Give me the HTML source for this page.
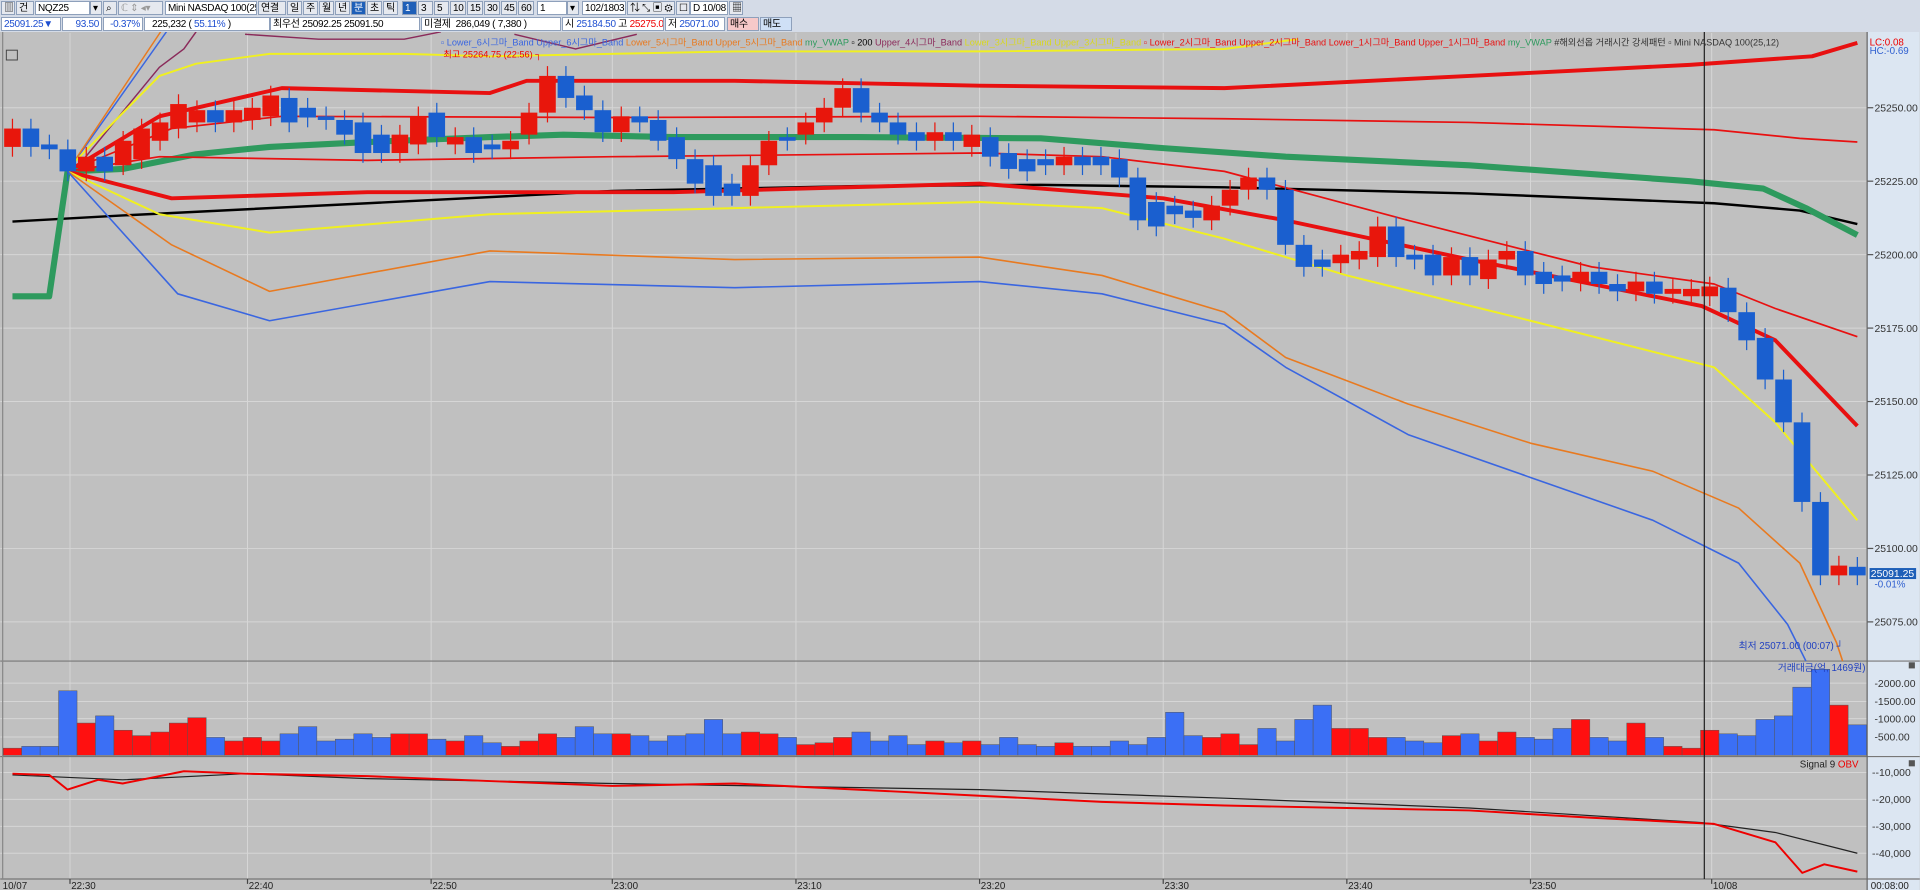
<!DOCTYPE html>
<html><head><meta charset="utf-8">
<style>
html,body{margin:0;padding:0;width:1920px;height:890px;overflow:hidden;background:#c0c0c0;font-family:"Liberation Sans","Noto Sans CJK KR",sans-serif;}
#tb{position:absolute;left:0;top:0;width:1920px;height:32px;background:#d4dbe7;font-size:10px;}
.r{position:absolute;left:0;height:16px;width:1920px;white-space:nowrap;}
.b{position:absolute;top:1px;height:14px;line-height:14px;background:#fff;border:1px solid #8ea0bb;box-sizing:border-box;padding:0 2px;color:#000;font-size:10px;letter-spacing:-0.3px;overflow:hidden}
.g{background:#e6e9ef}
.k{background:#1e5fb8;color:#fff}
svg{position:absolute;left:0;top:0}
</style></head><body>
<svg id="s" width="1920" height="890" viewBox="0 0 1568 727" font-family="Liberation Sans, Noto Sans CJK KR, sans-serif"></svg>
<div id="tb">
<div class="r" style="top:0">
<div class="b g" style="left:1px;width:14px">▥</div>
<div class="b g" style="left:16px;width:18px">건</div>
<div class="b" style="left:35px;width:55px">NQZ25</div>
<div class="b g" style="left:90px;width:12px">▾</div>
<div class="b g" style="left:103px;width:14px">⌕</div>
<div class="b g" style="left:118px;width:45px;color:#999">ℂ ⇕ ◂▾</div>
<div class="b" style="left:165px;width:92px">Mini NASDAQ 100(25.1</div>
<div class="b g" style="left:258px;width:28px">연결</div>
<div class="b g" style="left:287px;width:15px">일</div>
<div class="b g" style="left:303px;width:15px">주</div>
<div class="b g" style="left:319px;width:15px">월</div>
<div class="b g" style="left:335px;width:15px">년</div>
<div class="b k" style="left:351px;width:15px">분</div>
<div class="b g" style="left:367px;width:15px">초</div>
<div class="b g" style="left:383px;width:15px">틱</div>
<div class="b k" style="left:402px;width:15px">1</div>
<div class="b g" style="left:418px;width:15px">3</div>
<div class="b g" style="left:434px;width:15px">5</div>
<div class="b g" style="left:450px;width:16px">10</div>
<div class="b g" style="left:467px;width:16px">15</div>
<div class="b g" style="left:484px;width:16px">30</div>
<div class="b g" style="left:501px;width:16px">45</div>
<div class="b g" style="left:518px;width:16px">60</div>
<div class="b" style="left:537px;width:30px">1</div>
<div class="b g" style="left:567px;width:12px">▾</div>
<div class="b" style="left:582px;width:44px;text-align:right">102/1803</div>
<div class="b g" style="left:627px;width:48px">⇅ ⤡ ▣ ⚙</div>
<div class="b g" style="left:676px;width:14px">☐</div>
<div class="b" style="left:690px;width:38px">D 10/08</div>
<div class="b g" style="left:729px;width:14px">▦</div>
</div>
<div class="r" style="top:16px">
<div class="b" style="left:1px;width:60px;color:#1f4fd0">25091.25▼</div>
<div class="b" style="left:62px;width:40px;color:#1f4fd0;text-align:right">93.50</div>
<div class="b" style="left:103px;width:40px;color:#1f4fd0;text-align:right">-0.37%</div>
<div class="b" style="left:144px;width:126px">&nbsp;&nbsp;225,232 ( <span style="color:#1f4fd0">55.11%</span> )</div>
<div class="b" style="left:270px;width:150px">최우선 25092.25 25091.50</div>
<div class="b" style="left:421px;width:140px">미결제 &nbsp;286,049 ( 7,380 )</div>
<div class="b" style="left:562px;width:102px">시 <span style="color:#1f4fd0">25184.50</span> 고 <span style="color:#e00">25275.00</span></div>
<div class="b" style="left:665px;width:60px">저 <span style="color:#1f4fd0">25071.00</span></div>
<div class="b" style="left:727px;width:32px;background:#f6c9c9">매수</div>
<div class="b" style="left:760px;width:32px;background:#cfe0f6">매도</div>
</div>
</div>
<script>
var s=document.getElementById('s'),h='';
function P(pts,c,w){return '<polyline fill="none" stroke="'+c+'" stroke-width="'+w+'" stroke-linejoin="round" points="'+pts+'"/>';}
h+='<rect x="0" y="26" width="1568" height="701" fill="#c0c0c0"/>';
h+='<rect x="1525" y="26" width="43" height="701" fill="#dce6f2"/>';
var tx=[57,202,352,500,650,800,950,1100,1250,1398],tl=['22:30','22:40','22:50','23:00','23:10','23:20','23:30','23:40','23:50','10/08'];
tx.forEach(function(x){h+='<line x1="'+x+'" y1="27" x2="'+x+'" y2="718" stroke="#d6d6d6" stroke-width="0.8"/>';});
[ [88,'25250.00'],[148,'25225.00'],[208,'25200.00'],[268,'25175.00'],[328,'25150.00'],[388,'25125.00'],[448,'25100.00'],[508,'25075.00'] ].forEach(function(a){
h+='<line x1="0" y1="'+a[0]+'" x2="1525" y2="'+a[0]+'" stroke="#d6d6d6" stroke-width="0.8"/>';
h+='<line x1="1525" y1="'+a[0]+'" x2="1530" y2="'+a[0]+'" stroke="#555"/>';
h+='<text x="1531" y="'+(a[0]+3)+'" font-size="8.5" fill="#333">'+a[1]+'</text>';});
[[558,'2000.00'],[573,'1500.00'],[587,'1000.00'],[602,'500.00']].forEach(function(a){
h+='<line x1="0" y1="'+a[0]+'" x2="1525" y2="'+a[0]+'" stroke="#d6d6d6" stroke-width="0.8"/><text x="1531" y="'+(a[0]+3)+'" font-size="8.5" fill="#333">-'+a[1]+'</text>';});
[[631,'-10,000'],[653,'-20,000'],[675,'-30,000'],[697,'-40,000']].forEach(function(a){
h+='<line x1="0" y1="'+a[0]+'" x2="1525" y2="'+a[0]+'" stroke="#d6d6d6" stroke-width="0.8"/><text x="1529" y="'+(a[0]+3)+'" font-size="8.5" fill="#333">-'+a[1]+'</text>';});
h+='<line x1="0" y1="540" x2="1568" y2="540" stroke="#777"/><line x1="0" y1="618" x2="1568" y2="618" stroke="#777"/><line x1="0" y1="718" x2="1568" y2="718" stroke="#777"/>';
h+='<line x1="1525" y1="26" x2="1525" y2="727" stroke="#666"/><line x1="2" y1="26" x2="2" y2="718" stroke="#888"/>';
h+=P('55,140 140,20 150,0','#3a66e0',1.2)+P('55,140 135,20 145,0','#e87a20',1.2);
h+=P('60,140 130,55 150,40 160,26','#8a2a5a',1.2)+P('200,28 260,32 330,32 360,26','#8a2a5a',1.2)+P('420,28 470,40 520,28','#8a2a5a',1.2);
h+=P('55,138 130,62 160,52 220,44 330,44 400,46 600,42 800,42 1000,40 1060,32','#f0f020',1.6);
h+=P('55,140 130,95 230,72 400,76 430,66 600,66 800,70 1000,72 1200,62 1380,53 1480,46 1517,35','#e81010',3.2);
h+=P('55,140 140,105 230,95 500,96 800,95 1000,97 1200,100 1400,106 1470,113 1517,116','#e81010',1.4);
h+=P('10,181 100,176 300,166 500,156 700,152 850,151 1000,153 1200,158 1400,166 1470,172 1517,183','#000',2);
h+=P('10,242 40,242 55,140 100,138 160,126 220,120 300,116 400,112 460,110 550,112 700,112 850,113 950,121 1050,128 1200,135 1380,148 1440,154 1475,170 1517,192','#2e9a5e',5);
h+=P('55,140 130,128 300,131 500,128 800,125 900,128 1000,140 1150,180 1300,218 1400,232 1450,252 1517,275','#e81010',1.4);
h+=P('55,140 140,162 300,157 550,157 800,150 950,162 1050,180 1200,212 1300,232 1390,250 1450,278 1517,348','#e81010',3.2);
h+=P('55,140 130,175 220,190 400,175 600,170 800,165 900,170 1000,195 1100,225 1250,262 1400,300 1450,345 1517,425','#f0f020',1.6);
h+=P('55,140 140,200 220,238 400,205 600,212 800,210 900,225 1000,255 1050,292 1150,330 1250,362 1350,385 1420,415 1470,460 1500,525 1505,540','#e87a20',1.3);
h+=P('55,140 145,240 220,262 400,230 600,235 800,230 900,240 1000,265 1050,300 1150,355 1250,390 1350,425 1420,460 1460,510 1475,540','#3a66e0',1.3);
var C=[[120,105],[105,120],[118,122],[122,140],[140,128],[128,140],[135,115],[130,105],[115,100],[105,85],[100,90],[90,100],[100,90],[98,88],[95,78],[80,100],[88,96],[95,98],[98,110],[100,125],[110,125],[125,110],[118,95],[92,112],[118,112],[112,125],[118,122],[122,115],[110,92],[92,62],[62,80],[78,90],[90,108],[108,95],[95,100],[98,115],[112,130],[130,150],[135,160],[150,160],[160,135],[135,115],[112,115],[110,100],[100,88],[88,72],[72,92],[92,100],[100,110],[108,115],[115,108],[108,115],[120,110],[112,128],[125,138],[130,140],[130,135],[135,128],[128,135],[128,135],[130,145],[145,180],[165,185],[168,175],[172,178],[180,168],[168,155],[155,145],[145,155],[155,200],[200,218],[212,218],[215,208],[212,205],[210,185],[185,210],[208,212],[208,225],[225,210],[210,225],[228,212],[212,205],[205,225],[222,232],[225,230],[230,222],[222,232],[232,238],[238,230],[230,240],[240,236],[242,236],[242,234],[235,255],[255,278],[276,310],[310,345],[345,410],[410,470],[470,462],[463,470]];
var n=C.length,dx=(1517-10)/(n-1),bw=dx*0.9;
var V=[200,250,250,1800,900,1100,700,550,650,900,1050,500,400,500,400,600,800,400,450,600,500,600,600,450,400,550,350,250,400,600,500,800,600,600,550,400,550,600,1000,600,650,600,500,300,350,500,650,400,550,300,400,350,400,300,500,300,250,350,250,250,400,300,500,1200,550,500,600,300,750,400,1000,1400,750,750,500,500,400,350,550,600,400,650,500,450,750,1000,500,400,900,500,250,200,700,600,550,1000,1100,1900,2400,1400,850];
var off=V.length-n;
for(var i=0;i<n;i++){var x=10+i*dx,o=C[i][0],c=C[i][1],up=c<o,col=up?'#e8160c':'#1a5fcf';
var t=Math.min(o,c),b=Math.max(o,c);if(b-t<2)b=t+2;
h+='<line x1="'+x+'" y1="'+(t-8)+'" x2="'+x+'" y2="'+(b+8)+'" stroke="'+col+'" stroke-width="1"/>';
h+='<rect x="'+(x-bw/2)+'" y="'+t+'" width="'+bw+'" height="'+(b-t)+'" fill="'+col+'"/>';
var v=(i<60?V[i]:V[i+off])||400,vy=617-v*0.0293;
h+='<rect x="'+(x-dx/2)+'" y="'+vy+'" width="'+dx+'" height="'+(617-vy)+'" fill="'+(up?'#ff1010':'#3b6ff5')+'" stroke="#555" stroke-width="0.4"/>';}
h+=P('10,633 100,637 200,632 300,636 500,640 800,645 1000,652 1200,660 1390,672 1450,680 1517,697','#222',1);
h+=P('10,632 40,633 55,645 80,637 100,640 150,630 200,632 300,634 400,638 500,642 600,640 700,645 800,650 900,655 1000,658 1100,660 1200,662 1300,668 1400,673 1450,688 1472,713 1490,706 1517,712','#e00',1.6);
h+='<line x1="1392" y1="26" x2="1392" y2="718" stroke="#222" stroke-width="1"/>';
h+='<rect x="5" y="41" width="9" height="8" fill="none" stroke="#444" stroke-width="0.8"/>';
h+='<text x="360" y="37" font-size="7.5"><tspan fill="#3a66e0">▫ Lower_6시그마_Band Upper_6시그마_Band </tspan><tspan fill="#e87a20">Lower_5시그마_Band Upper_5시그마_Band </tspan><tspan fill="#2e9a5e">my_VWAP </tspan><tspan fill="#000">▫ 200 </tspan><tspan fill="#8a2a5a">Upper_4시그마_Band </tspan><tspan fill="#d8d820">Lower_3시그마_Band Upper_3시그마_Band </tspan><tspan fill="#e81010">▫ Lower_2시그마_Band Upper_2시그마_Band Lower_1시그마_Band Upper_1시그마_Band </tspan><tspan fill="#2e9a5e">my_VWAP </tspan><tspan fill="#333">#해외선옵 거래시간 강세패턴 ▫ Mini NASDAQ 100(25,12)</tspan></text>';
h+='<text x="362" y="47" font-size="7.5" fill="#e00">최고 25264.75 (22:56) ┐</text>';
h+='<text x="1527" y="37" font-size="8" fill="#e00">LC:0.08</text><text x="1527" y="44" font-size="8" fill="#3060d0">HC:-0.69</text>';
h+='<rect x="1527" y="464" width="38" height="9" fill="#1e5fb8"/><text x="1528" y="471.5" font-size="8.5" fill="#fff">25091.25</text><text x="1531" y="480" font-size="8" fill="#3060d0">-0.01%</text>';
h+='<text x="1420" y="530" font-size="8" fill="#2040c0">최저 25071.00 (00:07) ┘</text>';
h+='<text x="1452" y="548" font-size="8" fill="#2040c0">거래대금(억, 1469원)</text>';
h+='<text x="1470" y="627" font-size="8" fill="#222">Signal 9 <tspan fill="#e00">OBV</tspan></text>';
h+='<rect x="1559" y="541" width="5" height="5" fill="#555"/><rect x="1559" y="621" width="5" height="5" fill="#555"/>';
h+='<text x="2" y="726" font-size="8" fill="#222">10/07</text>';
tx.forEach(function(x,k){h+='<line x1="'+x+'" y1="718" x2="'+x+'" y2="722" stroke="#444"/><text x="'+(x+1)+'" y="726" font-size="8" fill="#222">'+tl[k]+'</text>';});
h+='<text x="1528" y="726" font-size="8" fill="#222">00:08:00</text>';
s.innerHTML=h;
</script>
</body></html>
